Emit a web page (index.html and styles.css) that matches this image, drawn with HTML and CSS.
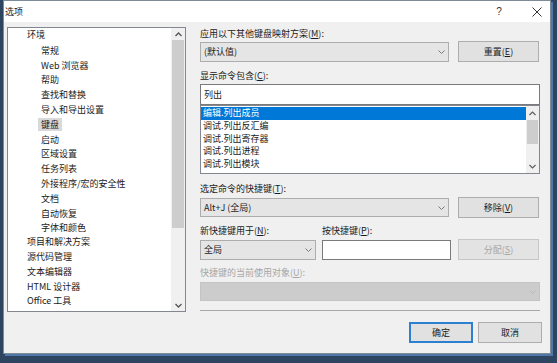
FILE: index.html
```html
<!DOCTYPE html>
<html lang="zh-CN">
<head>
<meta charset="utf-8">
<title>选项</title>
<link rel="stylesheet" href="styles.css">
</head>
<body>
<div class="dialog">
  <div class="titlebar">
    <span class="title">选项</span>
    <span class="tbtn help">?</span>
    <span class="tbtn close"><svg width="10" height="10" viewBox="0 0 10 10"><path d="M0.5 0.5 L9.5 9.5 M9.5 0.5 L0.5 9.5" stroke="#333" stroke-width="1" fill="none"/></svg></span>
  </div>
  <div class="main">
    <div class="tree">
      <div class="tree-items">
        <div class="ti">环境</div>
        <div class="ti c"><span>常规</span></div>
        <div class="ti c"><span>Web 浏览器</span></div>
        <div class="ti c"><span>帮助</span></div>
        <div class="ti c"><span>查找和替换</span></div>
        <div class="ti c"><span>导入和导出设置</span></div>
        <div class="ti c"><span class="sel">键盘</span></div>
        <div class="ti c"><span>启动</span></div>
        <div class="ti c"><span>区域设置</span></div>
        <div class="ti c"><span>任务列表</span></div>
        <div class="ti c"><span>外接程序/宏的安全性</span></div>
        <div class="ti c"><span>文档</span></div>
        <div class="ti c"><span>自动恢复</span></div>
        <div class="ti c"><span>字体和颜色</span></div>
        <div class="ti">项目和解决方案</div>
        <div class="ti">源代码管理</div>
        <div class="ti">文本编辑器</div>
        <div class="ti">HTML 设计器</div>
        <div class="ti">Office 工具</div>
      </div>
      <div class="vscroll tree-scroll">
        <div class="arrow up"><svg width="7" height="5" viewBox="0 0 7 5"><path d="M0.5 4 L3.5 1 L6.5 4" fill="none" stroke="#555" stroke-width="1.3"/></svg></div>
        <div class="thumb tree-thumb"></div>
        <div class="track"></div>
        <div class="arrow down"><svg width="7" height="5" viewBox="0 0 7 5"><path d="M0.5 1 L3.5 4 L6.5 1" fill="none" stroke="#555" stroke-width="1.3"/></svg></div>
      </div>
    </div>
    <div class="right">
      <div class="lbl">应用以下其他键盘映射方案(<span class="u">M</span>):</div>
      <div class="row r1">
        <div class="combo wide"><span class="ctext">(默认值)</span><svg class="dd" width="7" height="4" viewBox="0 0 7 4"><path d="M0.5 0.5 L3.5 3.5 L6.5 0.5" fill="none" stroke="#7a7a7a"/></svg></div>
        <div class="btn">重置(<span class="u">E</span>)</div>
      </div>
      <div class="lbl l2">显示命令包含(<span class="u">C</span>):</div>
      <div class="tb search">列出</div>
      <div class="lb">
        <div class="lb-items">
          <div class="li selected">编辑.列出成员</div>
          <div class="li">调试.列出反汇编</div>
          <div class="li">调试.列出寄存器</div>
          <div class="li">调试.列出进程</div>
          <div class="li">调试.列出模块</div>
        </div>
        <div class="vscroll lb-scroll">
          <div class="arrow up"><svg width="7" height="5" viewBox="0 0 7 5"><path d="M0.5 4 L3.5 1 L6.5 4" fill="none" stroke="#606060" stroke-width="1.2"/></svg></div>
          <div class="thumb lb-thumb"></div>
          <div class="track"></div>
          <div class="arrow down"><svg width="7" height="5" viewBox="0 0 7 5"><path d="M0.5 1 L3.5 4 L6.5 1" fill="none" stroke="#606060" stroke-width="1.2"/></svg></div>
        </div>
      </div>
      <div class="lbl l3">选定命令的快捷键(<span class="u">T</span>):</div>
      <div class="row r2">
        <div class="combo wide"><span class="ctext">Alt+J (全局)</span><svg class="dd" width="7" height="4" viewBox="0 0 7 4"><path d="M0.5 0.5 L3.5 3.5 L6.5 0.5" fill="none" stroke="#7a7a7a"/></svg></div>
        <div class="btn">移除(<span class="u">V</span>)</div>
      </div>
      <div class="row labels">
        <div class="lbl col-a">新快捷键用于(<span class="u">N</span>):</div>
        <div class="lbl col-b">按快捷键(<span class="u">P</span>):</div>
      </div>
      <div class="row r3">
        <div class="combo col-a"><span class="ctext">全局</span><svg class="dd" width="7" height="4" viewBox="0 0 7 4"><path d="M0.5 0.5 L3.5 3.5 L6.5 0.5" fill="none" stroke="#7a7a7a"/></svg></div>
        <div class="tb col-b keys"></div>
        <div class="btn disabled">分配(<span class="u">S</span>)</div>
      </div>
      <div class="lbl l5 dis">快捷键的当前使用对象(<span class="u">U</span>):</div>
      <div class="combo full disabled-combo"><span class="ctext"></span><svg class="dd" width="7" height="4" viewBox="0 0 7 4"><path d="M0.5 0.5 L3.5 3.5 L6.5 0.5" fill="none" stroke="#b8b8b8"/></svg></div>
      <div class="sep"></div>
      <div class="footer">
        <div class="btn fbtn default">确定</div>
        <div class="btn fbtn">取消</div>
      </div>
    </div>
  </div>
</div>
</body>
</html>
```
FILE: styles.css
```css
* { box-sizing: border-box; }
html, body { margin: 0; padding: 0; }
body {
  width: 557px;
  height: 363px;
  overflow: hidden;
  background: #2d4561;
  font-family: "Noto Sans CJK SC", "Noto Sans", sans-serif;
  font-size: 9px;
  color: #1a1a1a;
}
.dialog {
  margin-left: 3px;
  width: 548px;
  height: 354px;
  border: 1px solid #7d8a98;
  background: #f0f0f0;
  display: flex;
  flex-direction: column;
  box-shadow: 2px 2px 0 #4f78a8;
}
.titlebar {
  height: 21px;
  background: #ffffff;
  display: flex;
  align-items: center;
  padding-left: 1px;
}
.title { flex: 1; font-size: 9px; }
.tbtn {
  width: 26px;
  height: 21px;
  display: flex;
  align-items: center;
  justify-content: center;
}
.help { font-size: 10px; color: #333; margin-right: 12px; font-family: "Liberation Sans", sans-serif; }
.main {
  display: flex;
  padding: 5px 0 0 3px;
}
.tree {
  width: 179px;
  height: 285px;
  border: 1px solid #828790;
  background: #ffffff;
  display: flex;
}
.tree-items { flex: 1; }
.ti {
  height: 14.8px;
  line-height: 14.8px;
  padding-left: 19px;
  white-space: nowrap;
}
.ti.c { padding-left: 30px; }
.ti.c span { padding: 0 3px; display: inline-block; line-height: 13px; height: 13px; vertical-align: top; margin-top: 1px; }
.ti.c span.sel { background: #d9d9d9; }
.vscroll {
  display: flex;
  flex-direction: column;
  background: #f0f0f0;
}
.tree-scroll { width: 14px; }
.arrow {
  height: 12px;
  display: flex;
  align-items: center;
  justify-content: center;
}
.thumb { background: #cdcdcd; margin: 0 1px; }
.tree-thumb { height: 188px; }
.track { flex: 1; }
.right {
  margin-left: 14px;
  width: 340px;
  display: flex;
  flex-direction: column;
}
.lbl {
  height: 13px;
  line-height: 13px;
  white-space: nowrap;
}
.u { text-decoration: underline; }
.dis { color: #a6a6a6; }
.row {
  display: flex;
  align-items: center;
}
.r1 { margin-top: 1px; height: 21px; justify-content: space-between; width: 339px; }
.r2 { margin-top: 2px; height: 21px; justify-content: space-between; width: 339px; }
.r3 { margin-top: 2px; height: 21px; width: 339px; }
.labels { margin-top: 6px; }
.combo {
  height: 20px;
  border: 1px solid #adadad;
  background: #e5e5e5;
  display: flex;
  align-items: center;
  padding: 0 3px 0 3px;
}
.combo .ctext { flex: 1; white-space: nowrap; }
.combo.wide { width: 249px; }
.r2 .combo.wide { height: 19px; }
.btn {
  width: 81px;
  height: 21px;
  border: 1px solid #adadad;
  background: #e1e1e1;
  text-align: center;
  line-height: 19px;
}
.btn.disabled {
  background: #e3e3e3;
  border-color: #c6c6c6;
  color: #a6a6a6;
  margin-left: 7px;
}
.l2 { margin-top: 7px; }
.tb {
  height: 21px;
  border: 1px solid #7a7a7a;
  background: #ffffff;
  padding-left: 3px;
  line-height: 19px;
}
.search { margin-top: 2px; width: 340px; }
.lb {
  width: 340px;
  height: 69px;
  border: 1px solid #828790;
  background: #ffffff;
  display: flex;
}
.lb-items { flex: 1; padding-top: 1px; }
.li {
  height: 12.75px;
  line-height: 12.75px;
  padding-left: 2px;
  white-space: nowrap;
}
.li.selected { background: #0078d7; color: #ffffff; }
.lb-scroll { width: 13px; }
.lb-scroll .arrow { height: 14px; }
.lb-thumb { height: 24px; }
.l3 { margin-top: 8px; }
.col-a { width: 116px; }
.col-b { width: 129px; margin-left: 6px; }
.labels .col-b { margin-left: 6px; }
.r3 .combo { height: 20px; }
.keys { height: 20px; }
.l5 { margin-top: 6px; }
.full { width: 340px; margin-top: 3px; height: 19px; }
.disabled-combo { background: #cccccc; border-color: #c4c4c4; }
.sep {
  margin-top: 9px;
  width: 340px;
  height: 1px;
  background: #a8a8a8;
}
.footer {
  margin-top: 11px;
  display: flex;
  justify-content: flex-end;
  gap: 5px;
  margin-right: -2px;
}
.fbtn { width: 64px; height: 21px; }
.fbtn.default { border: 2px solid #2d7fcf; line-height: 17px; }
```
